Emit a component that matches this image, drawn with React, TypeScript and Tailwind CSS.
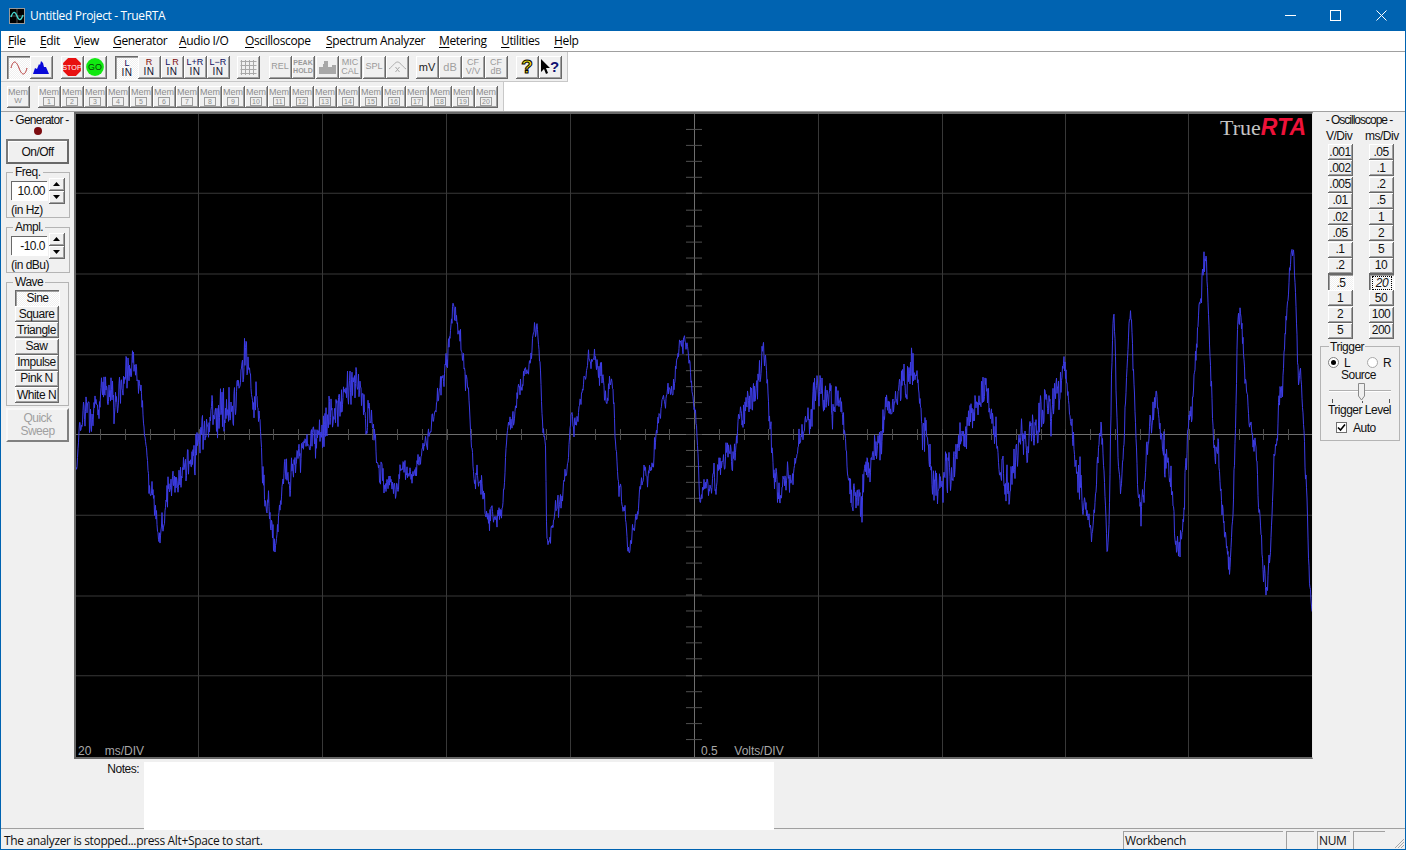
import React, { useMemo } from "react";

const sans = "font-['Liberation_Sans',Arial,sans-serif]";
const ui = "font-['Open_Sans','Noto_Sans',sans-serif]";
const bevel =
  "border-r border-b border-[#696969] shadow-[inset_1px_1px_0_#ffffff,inset_-1px_-1px_0_#a0a0a0] bg-[#f0f0f0]";
const sunken =
  "border-l border-t border-[#696969] shadow-[inset_1px_1px_0_#a0a0a0,1px_1px_0_#ffffff] bg-[repeating-conic-gradient(#ffffff_0_25%,#f0f0f0_0_50%)] bg-[length:2px_2px]";

const KEYS: [number, number][] = [
  [76, 470],[80, 402],[90, 425],[100, 392],[115, 405],[132, 356],[140, 395],[150, 480],[159, 532],[170, 490],[185, 470],[200, 440],[215, 415],[232, 405],[247, 358],[255, 405],[265, 480],[275, 532],[285, 480],[300, 450],[320, 430],[340, 400],[355, 382],[370, 410],[380, 470],[392, 488],[410, 470],[425, 450],[440, 400],[455, 308],[465, 370],[475, 470],[490, 505],[500, 515],[510, 420],[525, 372],[537, 332],[545, 430],[547, 535],[560, 495],[575, 420],[590, 358],[610, 385],[620, 490],[630, 544],[645, 480],[665, 392],[685, 338],[695, 400],[700, 503],[715, 480],[730, 450],[745, 402],[765, 374],[775, 485],[790, 480],[805, 420],[820, 388],[840, 405],[852, 505],[870, 460],[890, 410],[912, 370],[925, 430],[935, 480],[950, 470],[965, 420],[985, 392],[1005, 480],[1025, 440],[1050, 410],[1065, 392],[1080, 480],[1092, 518],[1100, 440],[1108, 536],[1113, 318],[1120, 490],[1130, 318],[1140, 505],[1155, 410],[1165, 470],[1180, 545],[1190, 410],[1205, 262],[1215, 450],[1230, 562],[1240, 312],[1250, 420],[1267, 582],[1280, 400],[1292, 238],[1300, 380],[1312, 584],
];

function makeWave(): string {
  let s = 7331;
  const rnd = () => {
    s = (s + 0x6d2b79f5) | 0;
    let t = Math.imul(s ^ (s >>> 15), 1 | s);
    t = (t + Math.imul(t ^ (t >>> 7), 61 | t)) ^ t;
    return ((t ^ (t >>> 14)) >>> 0) / 4294967296;
  };
  const keys = [...KEYS].sort((a, b) => a[0] - b[0]);
  const base = (x: number) => {
    for (let i = 0; i < keys.length - 1; i++) {
      if (x <= keys[i + 1][0]) {
        const f = (x - keys[i][0]) / (keys[i + 1][0] - keys[i][0] || 1);
        const g = (1 - Math.cos(f * Math.PI)) / 2;
        return keys[i][1] + (keys[i + 1][1] - keys[i][1]) * g;
      }
    }
    return keys[keys.length - 1][1];
  };
  const pts: string[] = [];
  let slow = 0;
  let burst = 0.7;
  for (let x = 76; x <= 1312; x += 0.5) {
    const high = x > 1070;
    burst = Math.min(1.4, Math.max(0.35, burst + (rnd() - 0.5) * 0.16));
    slow = slow * 0.82 + (rnd() - 0.5) * (high ? 20 : 15);
    const slope = Math.abs(base(x + 1) - base(x - 1));
    const a = (high ? 30 : 26) * burst * (slope > 9 ? 0.55 : 1);
    const spike = rnd() > 0.96 ? (rnd() - 0.5) * 26 : 0;
    const y = base(x) + slow + (rnd() - 0.5) * a + spike;
    pts.push(`${x.toFixed(1)} ${y.toFixed(1)}`);
  }
  return "M" + pts.join("L");
}

function Scope() {
  const wave = useMemo(makeWave, []);
  const vLines = [198, 322, 446, 570, 818, 942, 1065, 1188];
  const hLines = [192, 273, 354, 515, 596, 676];
  const hT = Array.from({ length: 49 }, (_, i) => 694 + (i - 24) * 24.75);
  const vT = Array.from({ length: 39 }, (_, i) => 434 + (i - 19) * 16.1);
  return (
    <div className="relative w-[1239px] h-[647px] bg-black border-t-2 border-l-2 border-[#696969] border-r border-b-2 border-r-[#e8e8e8] border-b-[#696969] shrink-0">
      <svg className="block w-full h-full" viewBox="76 113 1236 645" preserveAspectRatio="none">
        {vLines.map((x) => (
          <line key={x} x1={x + 0.5} x2={x + 0.5} y1={113} y2={758} stroke="#383838" />
        ))}
        {hLines.map((y) => (
          <line key={y} y1={y + 0.5} y2={y + 0.5} x1={76} x2={1312} stroke="#383838" />
        ))}
        <line x1={694.5} x2={694.5} y1={113} y2={758} stroke="#6e6e6e" />
        <line y1={434.5} y2={434.5} x1={76} x2={1312} stroke="#6e6e6e" />
        {hT.map((x) => (
          <line key={x} x1={Math.round(x) + 0.5} x2={Math.round(x) + 0.5} y1={429} y2={440} stroke="#4c4c4c" />
        ))}
        {vT.map((y) => (
          <line key={y} y1={Math.round(y) + 0.5} y2={Math.round(y) + 0.5} x1={686} x2={702} stroke="#505050" />
        ))}
        <path d={wave} fill="none" stroke="#3c3ce6" strokeWidth={1} />
      </svg>
      <div className="absolute right-[6px] top-0 flex items-baseline leading-[26px]">
        <span className="font-['Liberation_Serif',serif] text-[22px] text-[#c4c4c4]">True</span>
        <span className={`${sans} text-[23px] font-bold italic text-[#ee1239]`}>RTA</span>
      </div>
      <div className={`${sans} absolute left-[2px] -bottom-[2px] text-[12px] leading-[15px] text-[#a8a8a8] whitespace-pre`}>20    ms/DIV</div>
      <div className={`${sans} absolute left-[625px] -bottom-[2px] text-[12px] leading-[15px] text-[#a8a8a8] whitespace-pre`}>0.5     Volts/DIV</div>
    </div>
  );
}

function TB({ children, on, className = "" }: { children: React.ReactNode; on?: boolean; className?: string }) {
  return (
    <div className={`w-[23px] h-[23px] flex flex-col items-center justify-center shrink-0 ${on ? sunken : bevel} ${className}`}>
      {children}
    </div>
  );
}

function Two({ a, b, aClass = "text-[#101060]" }: { a: React.ReactNode; b: string; aClass?: string }) {
  return (
    <div className={`${sans} flex flex-col items-center text-[10px] leading-[9px]`}>
      <span className={`text-[9px] ${aClass}`}>{a}</span>
      <span className="text-[#101030] tracking-[0.5px]">{b}</span>
    </div>
  );
}

function Off2({ a, b, small }: { a: string; b: string; small?: boolean }) {
  return (
    <div className={`${sans} flex flex-col items-center text-[#9a9a9a] ${small ? "text-[7px] leading-[8px] font-bold" : "text-[9px] leading-[9px]"}`}>
      <span>{a}</span>
      <span>{b}</span>
    </div>
  );
}

function Toolbar1() {
  return (
    <div className="w-[567px] h-[30px] bg-[#f0f0f0] flex items-start pt-[4px] pl-[6px] border-r border-b border-[#c8c8c8]">
      <TB on>
        <svg width="18" height="14" viewBox="0 0 18 14">
          <path d="M1 7C3 -1 6 -1 9 7S15 15 17 7" fill="none" stroke="#b03030" strokeWidth="1" />
        </svg>
      </TB>
      <TB>
        <svg width="18" height="16" viewBox="0 0 18 16">
          <path d="M1 15L3 9L5 10L7 5L8 6L9 2L11 4L12 8L14 8L17 15Z" fill="#0808d8" />
        </svg>
      </TB>
      <TB className="ml-[8px]">
        <svg width="20" height="20" viewBox="0 0 18 18">
          <path d="M5.5 1H12.5L17 5.5V12.5L12.5 17H5.5L1 12.5V5.5Z" fill="#e81010" />
          <text x="9" y="11.5" textAnchor="middle" fontSize="6.5" fontFamily="Liberation Sans" fill="#fff">STOP</text>
        </svg>
      </TB>
      <TB>
        <svg width="20" height="20" viewBox="0 0 18 18">
          <circle cx="9" cy="9" r="8" fill="#10e810" />
          <text x="9" y="12" textAnchor="middle" fontSize="8" fontFamily="Liberation Sans" fill="#064006">GO</text>
        </svg>
      </TB>
      <TB on className="ml-[8px]"><Two a="L" b="IN" /></TB>
      <TB><Two a="R" b="IN" aClass="text-[#801010]" /></TB>
      <TB>
        <Two a={<span>L <span className="text-[#801010]">R</span></span>} b="IN" />
      </TB>
      <TB><Two a="L+R" b="IN" /></TB>
      <TB><Two a="L−R" b="IN" /></TB>
      <TB className="ml-[7px]">
        <svg width="17" height="15" viewBox="0 0 17 15">
          <path d="M0.5 1.5H16.5M0.5 5.5H16.5M0.5 9.5H16.5M0.5 13.5H16.5M1.5 0V15M5.5 0V15M9.5 0V15M13.5 0V15" stroke="#a8a8a8" fill="none" />
        </svg>
      </TB>
      <TB className="ml-[9px]"><span className={`${sans} text-[9px] text-[#9a9a9a]`}>REL</span></TB>
      <TB><Off2 a="PEAK" b="HOLD" small /></TB>
      <TB className="ml-[1px]">
        <svg width="17" height="14" viewBox="0 0 17 14"><path d="M0 14V7H4V4H5V1H9V7H13V5H17V14Z" fill="#a8a8a8" /></svg>
      </TB>
      <TB><Off2 a="MIC" b="CAL" /></TB>
      <TB className="ml-[1px]"><span className={`${sans} text-[9px] text-[#9a9a9a]`}>SPL</span></TB>
      <TB>
        <svg width="19" height="15" viewBox="0 0 19 15">
          <path d="M1 9C5 6 7 2 9.5 2S14 6 18 9" fill="none" stroke="#a8a8a8" />
          <path d="M7.5 7L11.5 12M11.5 7L7.5 12" stroke="#a8a8a8" />
        </svg>
      </TB>
      <TB className="ml-[7px]"><span className={`${sans} text-[11px] text-[#202020]`}>mV</span></TB>
      <TB><span className={`${sans} text-[11px] text-[#a0a0a0]`}>dB</span></TB>
      <TB><Off2 a="CF" b="V/V" /></TB>
      <TB><Off2 a="CF" b="dB" /></TB>
      <TB className="ml-[8px]">
        <span className={`${sans} text-[19px] leading-[20px] font-bold text-[#f0e010] [-webkit-text-stroke:1px_#000]`}>?</span>
      </TB>
      <TB>
        <div className="flex items-center">
          <svg width="9" height="16" viewBox="0 0 9 16"><path d="M0 0V13L3 10L5 15L7 14L5 9H9Z" fill="#000" /></svg>
          <span className={`${sans} text-[15px] leading-[16px] font-bold text-[#101070]`}>?</span>
        </div>
      </TB>
    </div>
  );
}

function Mem({ label, className = "" }: { label: string; className?: string }) {
  return (
    <div className={`w-[23px] h-[22px] flex flex-col items-center pt-[1px] shrink-0 ${bevel} ${className} ${sans}`}>
      <span className="text-[9px] leading-[10px] text-[#8c8c8c]">Mem</span>
      {label === "W" ? (
        <span className="text-[8px] leading-[8px] text-[#8c8c8c]">W</span>
      ) : (
        <span className="min-w-[12px] px-[1px] h-[9px] border border-[#9c9c9c] text-[7px] leading-[7px] text-center text-[#8c8c8c]">{label}</span>
      )}
    </div>
  );
}

function Toolbar2() {
  return (
    <div className="w-[503px] h-[29px] bg-[#f0f0f0] flex items-start pt-[4px] pl-[6px] border-r border-[#c8c8c8]">
      <Mem label="W" className="mr-[8px]" />
      {Array.from({ length: 20 }, (_, i) => (
        <Mem key={i} label={String(i + 1)} />
      ))}
    </div>
  );
}

function Spin() {
  return (
    <div className="flex flex-col w-[16px] shrink-0">
      <div className={`h-[13px] flex items-center justify-center ${bevel}`}>
        <svg width="7" height="4" viewBox="0 0 7 4"><path d="M3.5 0L7 4H0Z" fill="#000" /></svg>
      </div>
      <div className={`h-[13px] flex items-center justify-center ${bevel}`}>
        <svg width="7" height="4" viewBox="0 0 7 4"><path d="M0 0H7L3.5 4Z" fill="#000" /></svg>
      </div>
    </div>
  );
}

function NumGroup({ title, value, unit }: { title: string; value: string; unit: string }) {
  return (
    <fieldset className="ml-[5px] w-[63px] h-[53px] border border-[#b4b4b4] box-border px-[4px]">
      <legend className="ml-[2px] px-[2px] text-[12px] leading-[14px]">{title}</legend>
      <div className="flex items-start gap-[2px] -mt-[1px]">
        <div className="mt-[3px] w-[36px] h-[19px] bg-white border-t border-l border-[#696969] shadow-[1px_1px_0_#ffffff] text-right pr-[2px] text-[12px] leading-[19px]">{value}</div>
        <Spin />
      </div>
      <div className="text-[12px] leading-[14px] -mt-[1px] whitespace-nowrap">{unit}</div>
    </fieldset>
  );
}

function LeftPanel() {
  const waves = ["Square", "Triangle", "Saw", "Impulse", "Pink N", "White N"];
  return (
    <div className={`${sans} w-[73px] shrink-0 flex flex-col text-[#111] tracking-[-0.5px]`}>
      <div className="text-center text-[12px] leading-[16px] pl-[3px] whitespace-nowrap tracking-[-0.75px]">- Generator -</div>
      <div className="w-[8px] h-[8px] rounded-full bg-[#7c0c10] ml-[33px] -mt-[1px]" />
      <div className="ml-[5px] mt-[4px] w-[63px] h-[25px] border-2 border-t-[#7a7a7a] border-l-[#7a7a7a] border-r-[#696969] border-b-[#696969] bg-[#f0f0f0] shadow-[inset_1px_1px_0_#ffffff] flex items-center justify-center text-[12px]">
        On/Off
      </div>
      <div className="h-[1px]" />
      <NumGroup title="Freq." value="10.00" unit="(in Hz)" />
      <div className="h-[2px]" />
      <NumGroup title="Ampl." value="-10.0" unit="(in dBu)" />
      <div className="h-[2px]" />
      <fieldset className="ml-[5px] w-[63px] h-[131px] border border-[#b4b4b4] box-border pl-[8px] pt-[1px]">
        <legend className="-ml-[2px] px-[2px] text-[12px] leading-[14px]">Wave</legend>
        <div className={`w-[44px] h-[16px] pb-[1px] flex items-center justify-center text-[12px] ${sunken}`}>Sine</div>
        {waves.map((w) => (
          <div key={w} className={`w-[44px] h-[16px] mt-[0.2px] flex items-center justify-center text-[12px] ${bevel}`}>{w}</div>
        ))}
      </fieldset>
      <div className="ml-[5px] mt-[2px] w-[63px] h-[34px] flex flex-col items-center justify-center text-[12px] leading-[13px] text-[#a0a0a0] border-2 border-t-[#f8f8f8] border-l-[#f8f8f8] border-r-[#808080] border-b-[#808080] bg-[#f0f0f0]">
        <span>Quick</span>
        <span>Sweep</span>
      </div>
    </div>
  );
}

function RightPanel() {
  const v = [".001", ".002", ".005", ".01", ".02", ".05", ".1", ".2", ".5", "1", "2", "5"];
  const ms = [".05", ".1", ".2", ".5", "1", "2", "5", "10", "20", "50", "100", "200"];
  return (
    <div className={`${sans} flex-1 flex flex-col text-[#111] text-[12px] pl-[7px] tracking-[-0.5px]`}>
      <div className="text-center leading-[16px] pr-[7px] whitespace-nowrap tracking-[-1px]">- Oscilloscope -</div>
      <div className="flex leading-[16px] pl-[6px] whitespace-nowrap">
        <span className="w-[39px]">V/Div</span>
        <span>ms/Div</span>
      </div>
      <div className="flex pl-[8px] gap-[16px]">
        <div className="flex flex-col gap-[0.27px] w-[25px]">
          {v.map((t) => (
            <div key={t} className={`h-[16px] flex items-center justify-center ${t === ".5" ? sunken : bevel}`}>{t}</div>
          ))}
        </div>
        <div className="flex flex-col gap-[0.27px] w-[25px]">
          {ms.map((t) => (
            <div key={t} className={`h-[16px] flex items-center justify-center ${t === "20" ? sunken : bevel}`}>
              {t === "20" ? <span className="outline-1 outline-dotted outline-black leading-[12px] px-[3px] italic">20</span> : t}
            </div>
          ))}
        </div>
      </div>
      <fieldset className="w-[80px] h-[101px] mt-[1px] border border-[#b4b4b4] box-border">
        <legend className="ml-[8px] px-[1px] leading-[14px]">Trigger</legend>
        <div className="flex items-center pl-[7px] mt-[2px] leading-[14px]">
          <span className="w-[11px] h-[11px] rounded-full bg-white border border-[#808080] flex items-center justify-center">
            <span className="w-[5px] h-[5px] rounded-full bg-black" />
          </span>
          <span className="ml-[5px] w-[23px]">L</span>
          <span className="w-[11px] h-[11px] rounded-full bg-white border border-[#a8a8a8]" />
          <span className="ml-[5px]">R</span>
        </div>
        <div className="text-center leading-[14px] -mt-[2px] pr-[3px]">Source</div>
        <div className="relative h-[21px]">
          <div className="absolute left-[8px] right-[8px] top-[8px] h-[2px] bg-[#b0b0b0] border-b border-white" />
          <svg className="absolute left-[37px] top-[1px]" width="9" height="19" viewBox="0 0 9 19">
            <path d="M0.5 0.5H6.5V13L3.5 17L0.5 13Z" fill="#f0f0f0" stroke="#8a8a8a" />
          </svg>
          <div className="absolute left-[11px] top-[17px] w-[1px] h-[4px] bg-[#555]" />
          <div className="absolute left-[41px] top-[19px] w-[1px] h-[2px] bg-[#555]" />
          <div className="absolute left-[68px] top-[17px] w-[1px] h-[4px] bg-[#555]" />
        </div>
        <div className="text-center leading-[14px] whitespace-nowrap pr-[1px]">Trigger Level</div>
        <div className="flex items-center pl-[15px] mt-[4px] leading-[14px]">
          <span className="w-[11px] h-[11px] bg-white border border-[#707070] flex items-center justify-center">
            <svg width="9" height="9" viewBox="0 0 9 9"><path d="M1 4.5L3.5 7L8 1.5" fill="none" stroke="#000" strokeWidth="1.6" /></svg>
          </span>
          <span className="ml-[6px]">Auto</span>
        </div>
      </fieldset>
    </div>
  );
}

function Ul({ c, r }: { c: string; r: string }) {
  return (
    <span>
      <span className="underline underline-offset-2">{c}</span>
      {r}
    </span>
  );
}

export default function App() {
  const menu: [string, string, string][] = [
    ["F", "ile", "w-[32px]"],
    ["E", "dit", "w-[34px]"],
    ["V", "iew", "w-[39px]"],
    ["G", "enerator", "w-[66px]"],
    ["A", "udio I/O", "w-[66px]"],
    ["O", "scilloscope", "w-[81px]"],
    ["S", "pectrum Analyzer", "w-[113px]"],
    ["M", "etering", "w-[62px]"],
    ["U", "tilities", "w-[53px]"],
    ["H", "elp", "w-[40px]"],
  ];
  return (
    <div className="w-[1406px] h-[850px] overflow-hidden flex flex-col bg-[#f0f0f0] border-x border-b border-[#0063b1]">
      <div className={`${ui} h-[31px] shrink-0 bg-[#0063b1] flex items-center text-white text-[12px] tracking-[-0.35px]`}>
        <div className="ml-[8px] w-[16px] h-[16px] bg-black border border-[#999] flex items-center justify-center">
          <svg width="14" height="14" viewBox="0 0 14 14">
            <path d="M0 7.5V7H14" stroke="#666" strokeWidth="0.8" fill="none" />
            <path d="M7 0V14" stroke="#666" strokeWidth="0.8" />
            <path d="M1 8C3 2 5 2 7 7S11 12 13 6" stroke="#47d8d0" strokeWidth="1.4" fill="none" />
          </svg>
        </div>
        <span className="ml-[5px]">Untitled Project - TrueRTA</span>
        <div className="ml-auto flex h-full">
          <div className="w-[45px] flex items-center justify-center">
            <svg width="11" height="11" viewBox="0 0 11 11"><path d="M0 5.5H11" stroke="#fff" /></svg>
          </div>
          <div className="w-[45px] flex items-center justify-center">
            <svg width="11" height="11" viewBox="0 0 11 11"><rect x="0.5" y="0.5" width="10" height="10" fill="none" stroke="#fff" /></svg>
          </div>
          <div className="w-[47px] flex items-center justify-center">
            <svg width="11" height="11" viewBox="0 0 11 11"><path d="M0.5 0.5L10.5 10.5M10.5 0.5L0.5 10.5" stroke="#fff" /></svg>
          </div>
        </div>
      </div>
      <div className={`${ui} h-[21px] shrink-0 bg-white border-b border-[#a0a0a0] flex items-center pl-[7px] text-[12px] tracking-[-0.35px] text-black`}>
        {menu.map(([c, r, w]) => (
          <div key={c} className={w}><Ul c={c} r={r} /></div>
        ))}
      </div>
      <div className="h-[59px] shrink-0 bg-white flex flex-col">
        <Toolbar1 />
        <Toolbar2 />
      </div>
      <div className="flex-1 flex flex-col border-t border-[#a0a0a0] min-h-0">
        <div className="flex h-[647px] shrink-0">
          <LeftPanel />
          <Scope />
          <RightPanel />
        </div>
        <div className="flex-1 flex min-h-0">
          <div className={`${sans} w-[138px] shrink-0 text-right text-[12px] leading-[14px] pt-[3px] text-[#111] tracking-[-0.5px]`}>Notes:</div>
          <div className="ml-[5px] mt-[3px] w-[630px] -mb-[2px] bg-white relative" />
        </div>
      </div>
      <div className={`${ui} h-[21px] shrink-0 border-t border-[#a0a0a0] flex items-end text-[12px] tracking-[-0.35px] text-[#111]`}>
        <div className="w-[1122px] pl-[3px] h-[18px] leading-[20px]">The analyzer is stopped...press Alt+Space to start.</div>
        <div className="w-[160px] h-[18px] border-t border-l border-[#a0a0a0] pl-[1px] leading-[18px]">Workbench</div>
        <div className="ml-[3px] w-[28px] h-[18px] border-t border-l border-[#a0a0a0]" />
        <div className="ml-[3px] w-[33px] h-[18px] border-t border-l border-[#a0a0a0] pl-[1px] leading-[18px]">NUM</div>
        <div className="ml-[3px] w-[32px] h-[18px] border-t border-l border-[#a0a0a0]" />
        <svg className="ml-auto" width="13" height="13" viewBox="0 0 13 13">
          <path d="M12 3L3 12M12 6L6 12M12 9L9 12" stroke="#a8a8a8" />
        </svg>
      </div>
    </div>
  );
}
